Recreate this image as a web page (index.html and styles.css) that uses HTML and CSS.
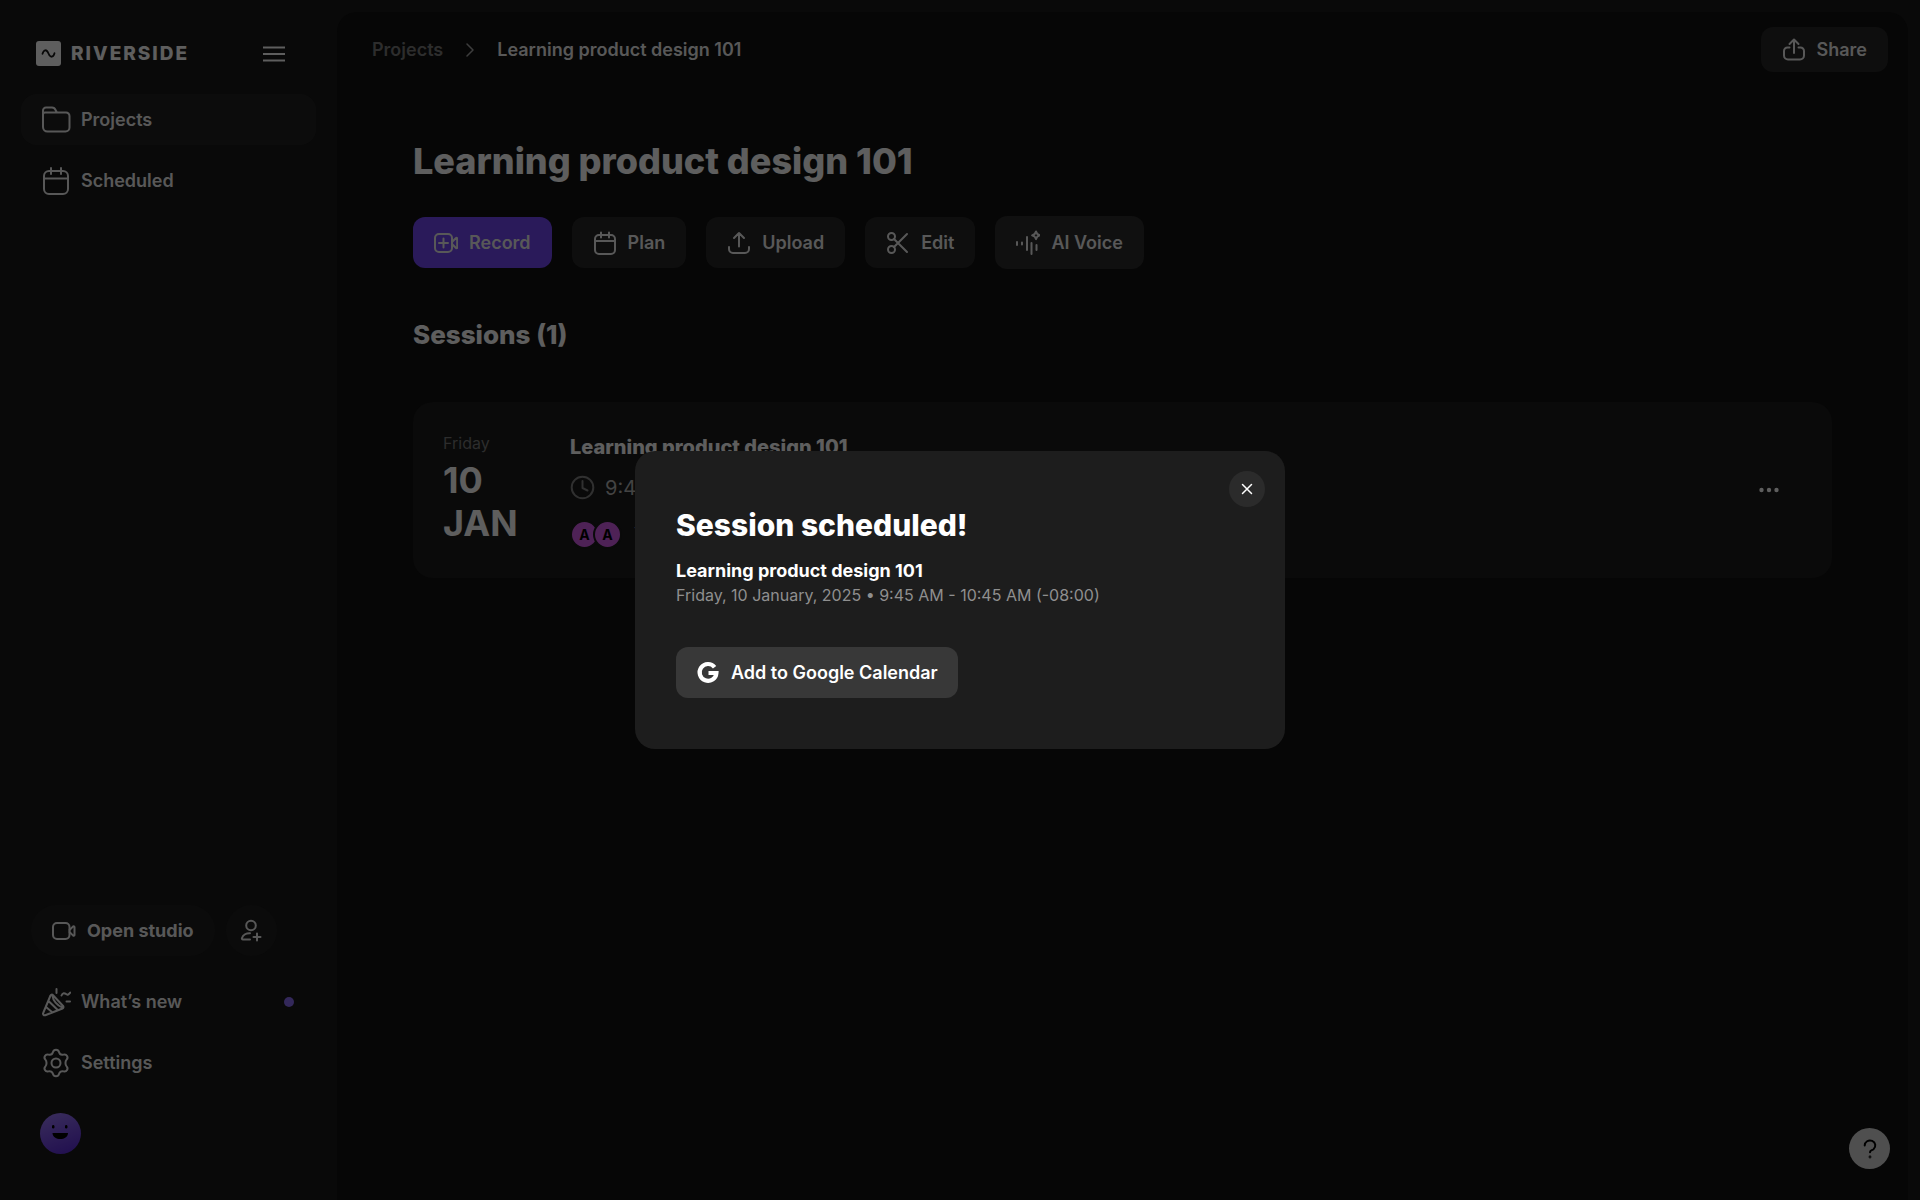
FILE: index.html
```html
<!DOCTYPE html>
<html lang="en">
<head>
    <meta charset="utf-8">
    <meta name="viewport" content="width=device-width, initial-scale=1">
    <title>Learning product design 101</title>
    <link rel="stylesheet" href="styles.css">
</head>
<body>
    <div class="app">
        <!-- Sidebar -->
        <aside class="sidebar">
            <div class="sidebar-top">
                <a href="#" class="logo">
                    <svg width="25" height="25" viewBox="0 0 25 25"><rect width="25" height="25" rx="3" fill="#ebebeb"/><path d="M6.500 12.800c1.200-4.500 4.200-4.800 6-.3s4.800 4.200 6-.3" fill="none" stroke="#161616" stroke-width="1.800" stroke-linecap="round"/></svg>
                    <span>RIVERSIDE</span>
                </a>
                <button class="menu-button" aria-label="Toggle menu">
                    <svg width="22" height="18" viewBox="0 0 22 18"><path d="M0 2.500h22M0 9h22M0 15.500h22"/></svg>
                </button>
            </div>
            <nav class="side-nav">
                <a href="#" class="side-link active">
                    <svg width="30" height="30" viewBox="0 0 30 30"><path d="M2 11V5.500a3 3 0 0 1 3-3h6a4 4 0 0 1 3.500 2.500L16 7.500H25a3.500 3.500 0 0 1 3.500 3.500v11.500a4 4 0 0 1-4 4h-18A4.500 4.500 0 0 1 2 22V9.500a2 2 0 0 1 2-2h12"/></svg>
                    <span>Projects</span>
                </a>
                <a href="#" class="side-link">
                    <svg width="30" height="30" viewBox="0 0 30 30"><rect x="3" y="5" width="24" height="23" rx="5"/><path d="M3 12.500h24M10 2v6M20 2v6"/></svg>
                    <span>Scheduled</span>
                </a>
            </nav>
            <div class="studio-row">
                <button class="studio-button">
                    <svg width="24" height="24" viewBox="0 0 24 24"><rect x="1" y="4" width="16.500" height="16" rx="4"/><path d="M17.500 11l3.700-3.600a.8.8 0 0 1 1.300.6v8a.8.8 0 0 1-1.300.6L17.500 13"/></svg>
                    Open studio
                </button>
                <button class="invite-button" aria-label="Invite">
                    <svg width="24" height="24" viewBox="0 0 24 24"><circle cx="12" cy="6.500" r="4.800"/><path d="M11 20.500H4c-1 0-1.300-.6-1-1.500 1-3 4.500-5 8-4.800M18 14.500v7M14.500 18h7"/></svg>
                </button>
            </div>
            <nav class="side-nav">
                <a href="#" class="side-link">
                    <svg width="30" height="30" viewBox="0 0 30 30"><path d="M9.500 8.500L2.200 26a1.600 1.600 0 0 0 2 2.200L21.500 21.500a1.600 1.600 0 0 0 .6-2.500L11.800 8a1.400 1.400 0 0 0-2.300.5zM7.500 14l9.500 9.300M11.500 9c.5 4.500 4.500 9.500 9.800 11.500M5 20l6.500 5.500M15.500 2v4M20.500 8.500c1.200-3 3-2.700 4.500-1.400s3 .2 4.200-1.500M25.500 14.500h3.500"/></svg>
                    <span>What’s new</span>
                    <i class="new-dot"></i>
                </a>
                <a href="#" class="side-link">
                    <svg width="30" height="30" viewBox="0 0 30 30"><circle cx="15" cy="15" r="4.500"/><path d="M12 4c.8-3 5.200-3 6 0 .6 2.200 2.400 3.200 4.600 2.600 3-.8 5.200 2.800 3 5-1.500 1.600-1.500 5.200 0 6.800 2.200 2.200 0 5.800-3 5-2.200-.6-4 .4-4.600 2.600-.8 3-5.200 3-6 0-.6-2.200-2.400-3.200-4.600-2.600-3 .8-5.200-2.800-3-5 1.500-1.600 1.500-5.200 0-6.800-2.200-2.200 0-5.800 3-5C9.600 7.200 11.400 6.200 12 4z"/></svg>
                    <span>Settings</span>
                </a>
            </nav>
            <a href="#" class="profile" aria-label="Profile">
                <svg width="23" height="17" viewBox="0 0 23 17"><rect x="3" y="0" width="2.400" height="3.500" rx="1.200"/><rect x="16" y="0" width="2.400" height="3.500" rx="1.200"/><path d="M3.500 8h15.500c-.3 8-15.200 8-15.500 0z"/></svg>
            </a>
        </aside>

        <!-- Project page -->
        <main class="main">
            <header class="topbar">
                <div class="breadcrumb">
                    <a href="#">Projects</a>
                    <svg width="8" height="14" viewBox="0 0 8 14"><path d="M1 1l6 6-6 6"/></svg>
                    <span>Learning product design 101</span>
                </div>
                <button class="share-button">
                    <svg width="24" height="24" viewBox="0 0 24 24"><path d="M7.500 9.500H5.500a3.500 3.500 0 0 0-3.500 3.500v4.500A4 4 0 0 0 6 21.500h12a4 4 0 0 0 4-4V13a3.500 3.500 0 0 0-3.500-3.500h-2M12 15V2M7.500 6L12 1.500 16.500 6"/></svg>
                    Share
                </button>
            </header>

            <section class="project">
                <h1>Learning product design 101</h1>
                <div class="actions">
                    <button class="action record">
                        <svg width="24" height="24" viewBox="0 0 24 24"><rect x="1" y="3" width="17" height="18" rx="4"/><path d="M18 11l4-4a.7.7 0 0 1 1.200.5v9a.7.7 0 0 1-1.200.5L18 13M9.500 7.500v9M5 12h9"/></svg>
                        Record
                    </button>
                    <button class="action">
                        <svg width="24" height="24" viewBox="0 0 24 24"><rect x="2" y="4" width="20" height="19" rx="4"/><path d="M2 10h20M8 1.500v5M16 1.500v5"/></svg>
                        Plan
                    </button>
                    <button class="action">
                        <svg width="24" height="24" viewBox="0 0 24 24"><path d="M2 16v2a4 4 0 0 0 4 4h12a4 4 0 0 0 4-4v-2M12 15.500V2M7 7l5-5 5 5"/></svg>
                        Upload
                    </button>
                    <button class="action">
                        <svg width="24" height="24" viewBox="0 0 24 24"><circle cx="5.500" cy="5.500" r="3.500"/><circle cx="5.500" cy="18.500" r="3.500"/><path d="M8 8l13 13M8 16L21 3"/></svg>
                        Edit
                    </button>
                    <button class="action voice">
                        <svg width="24" height="26" viewBox="0 0 24 26"><path d="M1 12v3M6 12.500v2M11 7v13M15.500 13v11M20.500 15v5M20 1.500l1.300 2.500 2.500 1.300-2.500 1.300L20 9.100l-1.300-2.500-2.500-1.300 2.500-1.300z"/></svg>
                        AI Voice
                    </button>
                </div>

                <h2>Sessions (1)</h2>
                <article class="session">
                    <div class="session-date">
                        <div class="weekday">Friday</div>
                        <div class="day">10<br>JAN</div>
                    </div>
                    <div class="session-info">
                        <h3>Learning product design 101</h3>
                        <div class="session-time">
                            <svg width="25" height="25" viewBox="0 0 25 25"><circle cx="12.500" cy="12.500" r="10.800"/><path d="M12.500 6v7l5 2.500"/></svg>
                            <span>9:45 AM - 10:45 AM</span>
                        </div>
                        <div class="people">
                            <span class="person">A</span>
                            <span class="person">A</span>
                            <span class="people-text">You</span>
                        </div>
                    </div>
                    <button class="more-button" aria-label="More options">
                        <svg width="20" height="6" viewBox="0 0 20 6"><circle cx="2.500" cy="3" r="2.200"/><circle cx="10" cy="3" r="2.200"/><circle cx="17.500" cy="3" r="2.200"/></svg>
                    </button>
                </article>
            </section>
        </main>
    </div>

    <button class="help-button" aria-label="Help">
        <svg width="16" height="22" viewBox="0 0 16 22"><path d="M2.700 7.500a5.300 5 0 1 1 8.800 3.700c-1.700 1.300-3.500 1.300-3.500 3"/><circle cx="8" cy="19" r=".4"/></svg>
    </button>

    <!-- Session scheduled dialog -->
    <div class="overlay">
        <div class="modal" role="dialog" aria-labelledby="modal-title">
            <button class="close-button" aria-label="Close">
                <svg width="12" height="12" viewBox="0 0 12 12"><path d="M1.500 1.500l9 9M10.500 1.500l-9 9"/></svg>
            </button>
            <h2 id="modal-title">Session scheduled!</h2>
            <p class="modal-name">Learning product design 101</p>
            <p class="modal-time">Friday, 10 January, 2025 • 9:45 AM - 10:45 AM (-08:00)</p>
            <button class="calendar-button">
                <svg width="24" height="24" viewBox="0 0 24 24"><path d="M18.600 6.200A8.400 8.400 0 1 0 20.400 12H12.500" fill="none" stroke="#fff" stroke-width="4.200"/></svg>
                Add to Google Calendar
            </button>
        </div>
    </div>
</body>
</html>
```

FILE: styles.css
```css
* {
    box-sizing: border-box;
}
body {
    margin: 0;
    background: #171717;
    color: #ebebeb;
    font-family: Inter, "Liberation Sans", sans-serif;
    font-size: 18px;
    line-height: 24px;
}
h1, h2, h3, p {
    margin: 0;
}
a {
    color: inherit;
    text-decoration: none;
}
button {
    border: none;
    padding: 0;
    background: none;
    color: inherit;
    font: inherit;
    font-weight: 600;
    display: flex;
    align-items: center;
    justify-content: center;
    cursor: pointer;
}
svg {
    flex: none;
    fill: none;
    stroke: currentColor;
    stroke-width: 2;
    stroke-linecap: round;
    stroke-linejoin: round;
}
.app {
    display: flex;
    min-height: 100vh;
}

/* Sidebar */
.sidebar {
    width: 337px;
    flex: none;
    display: flex;
    flex-direction: column;
    padding: 41px 21px 46px;
}
.sidebar-top {
    display: flex;
    align-items: center;
    justify-content: space-between;
    padding: 0 31px 0 15px;
    margin-bottom: 28px;
}
.logo {
    display: flex;
    align-items: center;
    gap: 10px;
    font-size: 19px;
    font-weight: 800;
    letter-spacing: 2px;
}
.logo svg {
    stroke: none;
}
.menu-button svg {
    stroke-linecap: butt;
}
.side-nav {
    display: flex;
    flex-direction: column;
    gap: 10px;
}
.side-link {
    display: flex;
    align-items: center;
    gap: 10px;
    height: 51px;
    padding: 0 22px 0 20px;
    border-radius: 16px;
    font-weight: 600;
    color: #dcdcdc;
}
.side-link.active {
    background: #202020;
}
.new-dot {
    width: 10px;
    height: 10px;
    margin-left: auto;
    border-radius: 50%;
    background: #8064e0;
}
.studio-row {
    display: flex;
    gap: 11px;
    margin-top: auto;
    margin-bottom: 20px;
    padding-left: 10px;
}
.studio-button, .invite-button {
    height: 51px;
    border-radius: 26px;
    background: #1d1d1d;
    color: #dcdcdc;
}
.studio-button {
    gap: 11px;
    padding: 0 21px;
    font-weight: 700;
}
.invite-button {
    width: 51px;
}
.profile {
    width: 41px;
    height: 41px;
    margin: 25px 0 0 19px;
    display: flex;
    align-items: center;
    justify-content: center;
    border-radius: 50%;
    background: linear-gradient(160deg, #9273e6, #4f22c4);
}
.profile svg {
    fill: #000;
    stroke: none;
}

/* Project page */
.main {
    flex: 1;
    min-width: 0;
    margin: 12px 12px 0 0;
    border-radius: 20px 20px 0 0;
    background: #0f0f0f;
}
.topbar {
    display: flex;
    align-items: center;
    justify-content: space-between;
    padding: 15px 20px 0 35px;
}
.breadcrumb {
    display: flex;
    align-items: center;
    gap: 23px;
    font-weight: 600;
    color: #dcdcdc;
}
.breadcrumb a {
    color: #707070;
}
.breadcrumb svg {
    color: #9a9a9a;
    stroke-width: 1.5;
}
.share-button {
    height: 45px;
    gap: 11px;
    padding: 0 21px;
    border-radius: 12px;
    background: #232323;
    color: #dcdcdc;
}
.project {
    padding: 66px 76px 40px;
}
h1 {
    font-size: 36px;
    line-height: 46px;
    font-weight: 800;
}
.actions {
    display: flex;
    align-items: center;
    gap: 20px;
    margin-top: 32px;
}
.action {
    height: 51px;
    gap: 11px;
    padding: 0 21px;
    border-radius: 12px;
    background: #242424;
    color: #dcdcdc;
}
.action.record {
    background: #6941e0;
}
.action.voice {
    height: 53px;
    background: #282828;
}
h2 {
    margin-top: 48px;
    font-size: 26px;
    line-height: 36px;
    font-weight: 800;
}
.session {
    display: flex;
    align-items: flex-start;
    margin-top: 49px;
    padding: 29px 30px;
    border-radius: 20px;
    background: #191919;
}
.session-date {
    width: 127px;
}
.weekday {
    font-size: 16px;
    line-height: 24px;
    color: #707070;
}
.day {
    margin-top: 4px;
    font-size: 36px;
    line-height: 43px;
    font-weight: 700;
}
.session-info {
    flex: 1;
}
h3 {
    font-size: 20px;
    line-height: 32px;
    font-weight: 800;
}
.session-time {
    display: flex;
    align-items: center;
    gap: 10px;
    margin-top: 12px;
    font-size: 20px;
    color: #a8a8a8;
}
.session-time svg {
    color: #787878;
}
.people {
    display: flex;
    align-items: center;
    margin-top: 20px;
}
.person {
    width: 29px;
    height: 29px;
    display: flex;
    align-items: center;
    justify-content: center;
    border: 2px solid #191919;
    border-radius: 50%;
    background: #c455d8;
    color: #000;
    font-size: 14px;
    font-weight: 700;
}
.person + .person {
    margin-left: -6px;
}
.people-text {
    margin-left: 12px;
    color: #a8a8a8;
}
.more-button {
    align-self: center;
    width: 66px;
    height: 40px;
}
.more-button svg {
    fill: currentColor;
    stroke: none;
}
.help-button {
    position: fixed;
    right: 30px;
    bottom: 31px;
    width: 41px;
    height: 41px;
    border-radius: 50%;
    background: #c6c6c6;
    color: #000;
}

/* Dialog */
.overlay {
    position: fixed;
    inset: 0;
    display: flex;
    align-items: center;
    justify-content: center;
    background: rgba(0, 0, 0, 0.6);
}
.modal {
    position: relative;
    width: 650px;
    padding: 54px 41px 51px;
    border-radius: 20px;
    background: #1d1d1d;
    color: #fff;
}
.modal h2 {
    margin: 0;
    font-size: 30px;
    line-height: 40px;
}
.modal-name {
    margin-top: 14px;
    font-weight: 700;
}
.modal-time {
    font-size: 16px;
    color: #8f8f8f;
}
.close-button {
    position: absolute;
    top: 20px;
    right: 20px;
    width: 36px;
    height: 36px;
    border-radius: 50%;
    background: #2b2b2b;
}
.close-button svg {
    stroke-width: 1.5;
}
.calendar-button {
    height: 51px;
    margin-top: 40px;
    padding: 0 20px;
    gap: 11px;
    border-radius: 12px;
    background: #383838;
}
.calendar-button svg {
    stroke-linecap: butt;
    stroke-linejoin: miter;
}
```
